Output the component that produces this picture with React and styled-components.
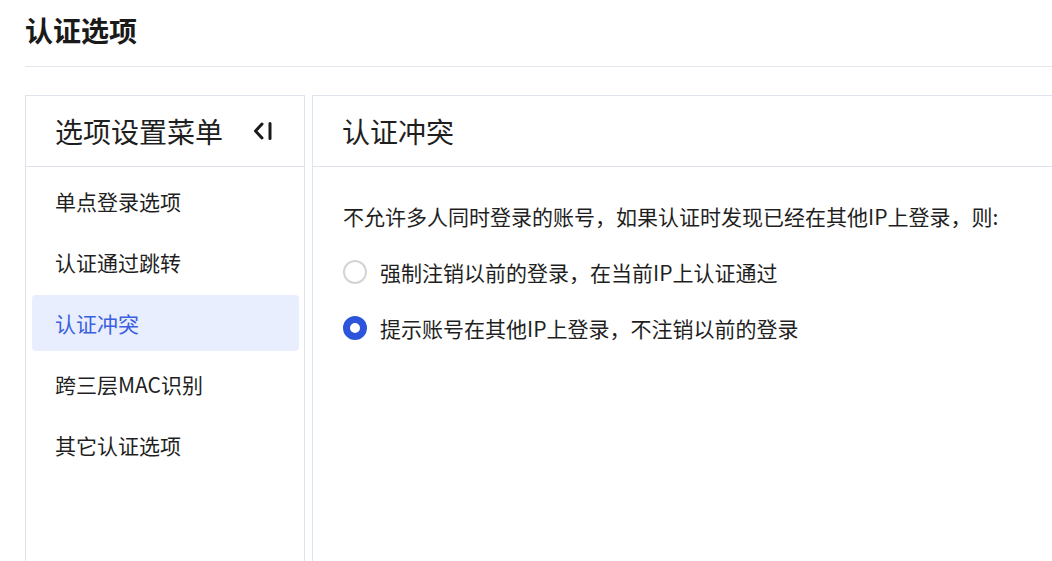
import React, { useState } from "react";
import styled, { createGlobalStyle } from "styled-components";

const Global = createGlobalStyle`
  html, body { margin: 0; padding: 0; background: #fff; overflow: hidden; }
  body { font-family: "Noto Sans CJK SC", "Noto Sans", sans-serif; color: #1f1f1f; }
`;

const Page = styled.div`
  width: 100vw;
  height: 100vh;
  overflow: hidden;
  padding-left: 25px;
  box-sizing: border-box;
`;

const Title = styled.h1`
  margin: 0;
  padding: 10px 0 16px;
  font-size: 28px;
  line-height: 40px;
  font-weight: 700;
  color: #1a1a1a;
  border-bottom: 1px solid #e3e6ee;
`;

const Body = styled.div`
  display: grid;
  grid-template-columns: 280px 1fr;
  gap: 7px;
  margin-top: 28px;
  margin-right: -30px;
`;

const Panel = styled.section`
  border: 1px solid #dfe3ed;
  min-height: 500px;
  background: #fff;
`;

const PanelHeader = styled.div`
  height: 70px;
  display: flex;
  align-items: center;
  justify-content: space-between;
  padding: 0 30px 0 29px;
  border-bottom: 1px solid #dfe3ed;
  font-size: 28px;
  color: #1f1f1f;
`;

const CollapseButton = styled.button`
  border: 0;
  background: none;
  padding: 0;
  width: 22px;
  height: 22px;
  display: flex;
  align-items: center;
  justify-content: center;
  cursor: pointer;
  margin-right: 1px;
`;

const Menu = styled.ul`
  list-style: none;
  margin: 0;
  padding: 6px 5px 0 6px;
  display: flex;
  flex-direction: column;
  gap: 5px;
`;

const MenuItem = styled.li`
  height: 56px;
  display: flex;
  align-items: center;
  padding-left: 23px;
  font-size: 21px;
  border-radius: 4px;
  cursor: pointer;
  color: ${(p) => (p.$active ? "#3a5fe0" : "#1f1f1f")};
  background: ${(p) => (p.$active ? "#e8eefd" : "transparent")};
`;

const Content = styled.div`
  padding: 33px 30px 0 30px;
`;

const Intro = styled.p`
  margin: 0 0 12px;
  font-size: 21px;
  line-height: 32px;
`;

const RadioRow = styled.label`
  display: flex;
  align-items: center;
  gap: 13px;
  height: 56px;
  font-size: 21px;
  cursor: pointer;
`;

const RadioCircle = styled.span`
  width: 24px;
  height: 24px;
  border-radius: 50%;
  box-sizing: border-box;
  flex: none;
  border: ${(p) => (p.$checked ? "7px solid #2d55db" : "2px solid #d4d4d4")};
  background: #fff;
`;

const items = ["单点登录选项", "认证通过跳转", "认证冲突", "跨三层MAC识别", "其它认证选项"];
const options = [
  "强制注销以前的登录，在当前IP上认证通过",
  "提示账号在其他IP上登录，不注销以前的登录",
];

export default function App() {
  const [active, setActive] = useState(2);
  const [choice, setChoice] = useState(1);
  return (
    <Page>
      <Global />
      <Title>认证选项</Title>
      <Body>
        <Panel>
          <PanelHeader>
            <span>选项设置菜单</span>
            <CollapseButton aria-label="收起">
              <svg width="22" height="22" viewBox="0 0 22 22" fill="none">
                <path d="M11 4 L4.5 11 L11 18" stroke="#1a1a1a" strokeWidth="3" strokeLinecap="round" strokeLinejoin="round" />
                <path d="M19 3.5 V18.5" stroke="#1a1a1a" strokeWidth="3" strokeLinecap="round" />
              </svg>
            </CollapseButton>
          </PanelHeader>
          <Menu>
            {items.map((t, i) => (
              <MenuItem key={t} $active={i === active} onClick={() => setActive(i)}>
                {t}
              </MenuItem>
            ))}
          </Menu>
        </Panel>
        <Panel>
          <PanelHeader>
            <span>认证冲突</span>
          </PanelHeader>
          <Content>
            <Intro>不允许多人同时登录的账号，如果认证时发现已经在其他IP上登录，则:</Intro>
            {options.map((o, i) => (
              <RadioRow key={o} onClick={() => setChoice(i)}>
                <RadioCircle $checked={choice === i} />
                {o}
              </RadioRow>
            ))}
          </Content>
        </Panel>
      </Body>
    </Page>
  );
}
